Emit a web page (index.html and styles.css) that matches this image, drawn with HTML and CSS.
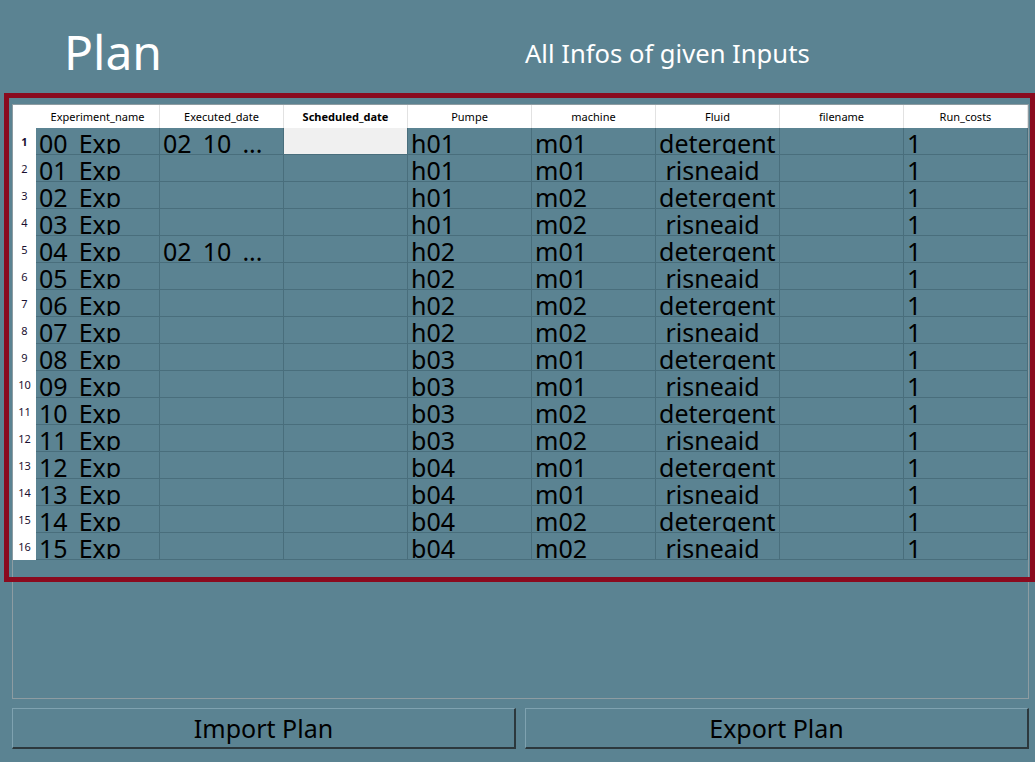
FILE: index.html
```html
<!DOCTYPE html>
<html>
<head>
<meta charset="utf-8">
<title>Plan</title>
<link rel="stylesheet" href="styles.css">
</head>
<body>
<div class="app">
  <div class="top">
    <div class="title">Plan</div>
    <div class="subtitle">All Infos of given Inputs</div>
  </div>
  <div class="frame">
    <div class="hrow">
      <div class="corner"></div>
      <div class="hcell">Experiment_name</div>
      <div class="hcell">Executed_date</div>
      <div class="hcell bold">Scheduled_date</div>
      <div class="hcell">Pumpe</div>
      <div class="hcell">machine</div>
      <div class="hcell">Fluid</div>
      <div class="hcell">filename</div>
      <div class="hcell">Run_costs</div>
    </div>
    <div class="row"><div class="rh bold">1</div><div class="cell">00_Exp</div><div class="cell">02_10_...</div><div class="cell sel"></div><div class="cell">h01</div><div class="cell">m01</div><div class="cell">detergent</div><div class="cell"></div><div class="cell">1</div></div>
    <div class="row"><div class="rh">2</div><div class="cell">01_Exp</div><div class="cell"></div><div class="cell"></div><div class="cell">h01</div><div class="cell">m01</div><div class="cell"> risneaid</div><div class="cell"></div><div class="cell">1</div></div>
    <div class="row"><div class="rh">3</div><div class="cell">02_Exp</div><div class="cell"></div><div class="cell"></div><div class="cell">h01</div><div class="cell">m02</div><div class="cell">detergent</div><div class="cell"></div><div class="cell">1</div></div>
    <div class="row"><div class="rh">4</div><div class="cell">03_Exp</div><div class="cell"></div><div class="cell"></div><div class="cell">h01</div><div class="cell">m02</div><div class="cell"> risneaid</div><div class="cell"></div><div class="cell">1</div></div>
    <div class="row"><div class="rh">5</div><div class="cell">04_Exp</div><div class="cell">02_10_...</div><div class="cell"></div><div class="cell">h02</div><div class="cell">m01</div><div class="cell">detergent</div><div class="cell"></div><div class="cell">1</div></div>
    <div class="row"><div class="rh">6</div><div class="cell">05_Exp</div><div class="cell"></div><div class="cell"></div><div class="cell">h02</div><div class="cell">m01</div><div class="cell"> risneaid</div><div class="cell"></div><div class="cell">1</div></div>
    <div class="row"><div class="rh">7</div><div class="cell">06_Exp</div><div class="cell"></div><div class="cell"></div><div class="cell">h02</div><div class="cell">m02</div><div class="cell">detergent</div><div class="cell"></div><div class="cell">1</div></div>
    <div class="row"><div class="rh">8</div><div class="cell">07_Exp</div><div class="cell"></div><div class="cell"></div><div class="cell">h02</div><div class="cell">m02</div><div class="cell"> risneaid</div><div class="cell"></div><div class="cell">1</div></div>
    <div class="row"><div class="rh">9</div><div class="cell">08_Exp</div><div class="cell"></div><div class="cell"></div><div class="cell">b03</div><div class="cell">m01</div><div class="cell">detergent</div><div class="cell"></div><div class="cell">1</div></div>
    <div class="row"><div class="rh">10</div><div class="cell">09_Exp</div><div class="cell"></div><div class="cell"></div><div class="cell">b03</div><div class="cell">m01</div><div class="cell"> risneaid</div><div class="cell"></div><div class="cell">1</div></div>
    <div class="row"><div class="rh">11</div><div class="cell">10_Exp</div><div class="cell"></div><div class="cell"></div><div class="cell">b03</div><div class="cell">m02</div><div class="cell">detergent</div><div class="cell"></div><div class="cell">1</div></div>
    <div class="row"><div class="rh">12</div><div class="cell">11_Exp</div><div class="cell"></div><div class="cell"></div><div class="cell">b03</div><div class="cell">m02</div><div class="cell"> risneaid</div><div class="cell"></div><div class="cell">1</div></div>
    <div class="row"><div class="rh">13</div><div class="cell">12_Exp</div><div class="cell"></div><div class="cell"></div><div class="cell">b04</div><div class="cell">m01</div><div class="cell">detergent</div><div class="cell"></div><div class="cell">1</div></div>
    <div class="row"><div class="rh">14</div><div class="cell">13_Exp</div><div class="cell"></div><div class="cell"></div><div class="cell">b04</div><div class="cell">m01</div><div class="cell"> risneaid</div><div class="cell"></div><div class="cell">1</div></div>
    <div class="row"><div class="rh">15</div><div class="cell">14_Exp</div><div class="cell"></div><div class="cell"></div><div class="cell">b04</div><div class="cell">m02</div><div class="cell">detergent</div><div class="cell"></div><div class="cell">1</div></div>
    <div class="row"><div class="rh">16</div><div class="cell">15_Exp</div><div class="cell"></div><div class="cell"></div><div class="cell">b04</div><div class="cell">m02</div><div class="cell"> risneaid</div><div class="cell"></div><div class="cell">1</div></div>
    <div class="highlight"></div>
  </div>
  <div class="buttons">
    <div class="btn">Import Plan</div>
    <div class="btn">Export Plan</div>
  </div>
</div>
</body>
</html>
```
FILE: styles.css
```css
html, body {
  margin: 0;
  padding: 0;
  background: #5b8392;
}
body {
  font-family: "Noto Sans", "Open Sans", sans-serif;
  color: #000;
  width: 1035px;
  height: 762px;
  overflow: hidden;
}
.app {
  padding: 0 6px 0 12px;
  display: flex;
  flex-direction: column;
}
.top {
  display: grid;
  grid-template-columns: 504px 504px;
  column-gap: 9px;
  height: 104px;
}
.title {
  color: #fff;
  font-size: 48px;
  padding-top: 19px;
  padding-left: 52px;
  line-height: normal;
}
.subtitle {
  color: #fff;
  font-size: 25.6px;
  padding-top: 36px;
  line-height: normal;
}
.frame {
  position: relative;
  box-sizing: border-box;
  height: 595px;
  border: 1px solid #8d9ca2;
}
.hrow {
  display: flex;
  height: 23px;
  background: #fff;
}
.corner {
  width: 23px;
  flex: none;
}
.hcell {
  width: 124px;
  flex: none;
  box-sizing: border-box;
  border-right: 1px solid #e2e2e2;
  font-size: 11px;
  display: flex;
  align-items: center;
  justify-content: center;
}
.bold {
  font-weight: bold;
}
.row {
  display: flex;
  height: 27px;
}
.rh {
  width: 23px;
  flex: none;
  background: #fff;
  font-size: 11px;
  display: flex;
  align-items: center;
  justify-content: center;
  color: #1a1030;
}
.cell {
  width: 124px;
  height: 27px;
  flex: none;
  box-sizing: border-box;
  border-right: 1px solid #496e7c;
  border-bottom: 1px solid #496e7c;
  overflow: hidden;
  white-space: pre;
  font-size: 25px;
  line-height: 26px;
  padding: 2px 0 0 3px;
}
.sel {
  background: #f0f0f0;
}
.highlight {
  position: absolute;
  left: -9px;
  top: -12px;
  width: 1031px;
  height: 489px;
  box-sizing: border-box;
  border: 5px solid #8a0a1e;
  pointer-events: none;
}
.buttons {
  display: grid;
  grid-template-columns: 504px 504px;
  column-gap: 9px;
  margin-top: 9px;
}
.btn {
  height: 41px;
  box-sizing: border-box;
  border-top: 1px solid #7fa2b0;
  border-left: 1px solid #7fa2b0;
  border-right: 2px solid #2c383d;
  border-bottom: 2px solid #2c383d;
  display: flex;
  align-items: center;
  justify-content: center;
  font-size: 25px;
}
```
